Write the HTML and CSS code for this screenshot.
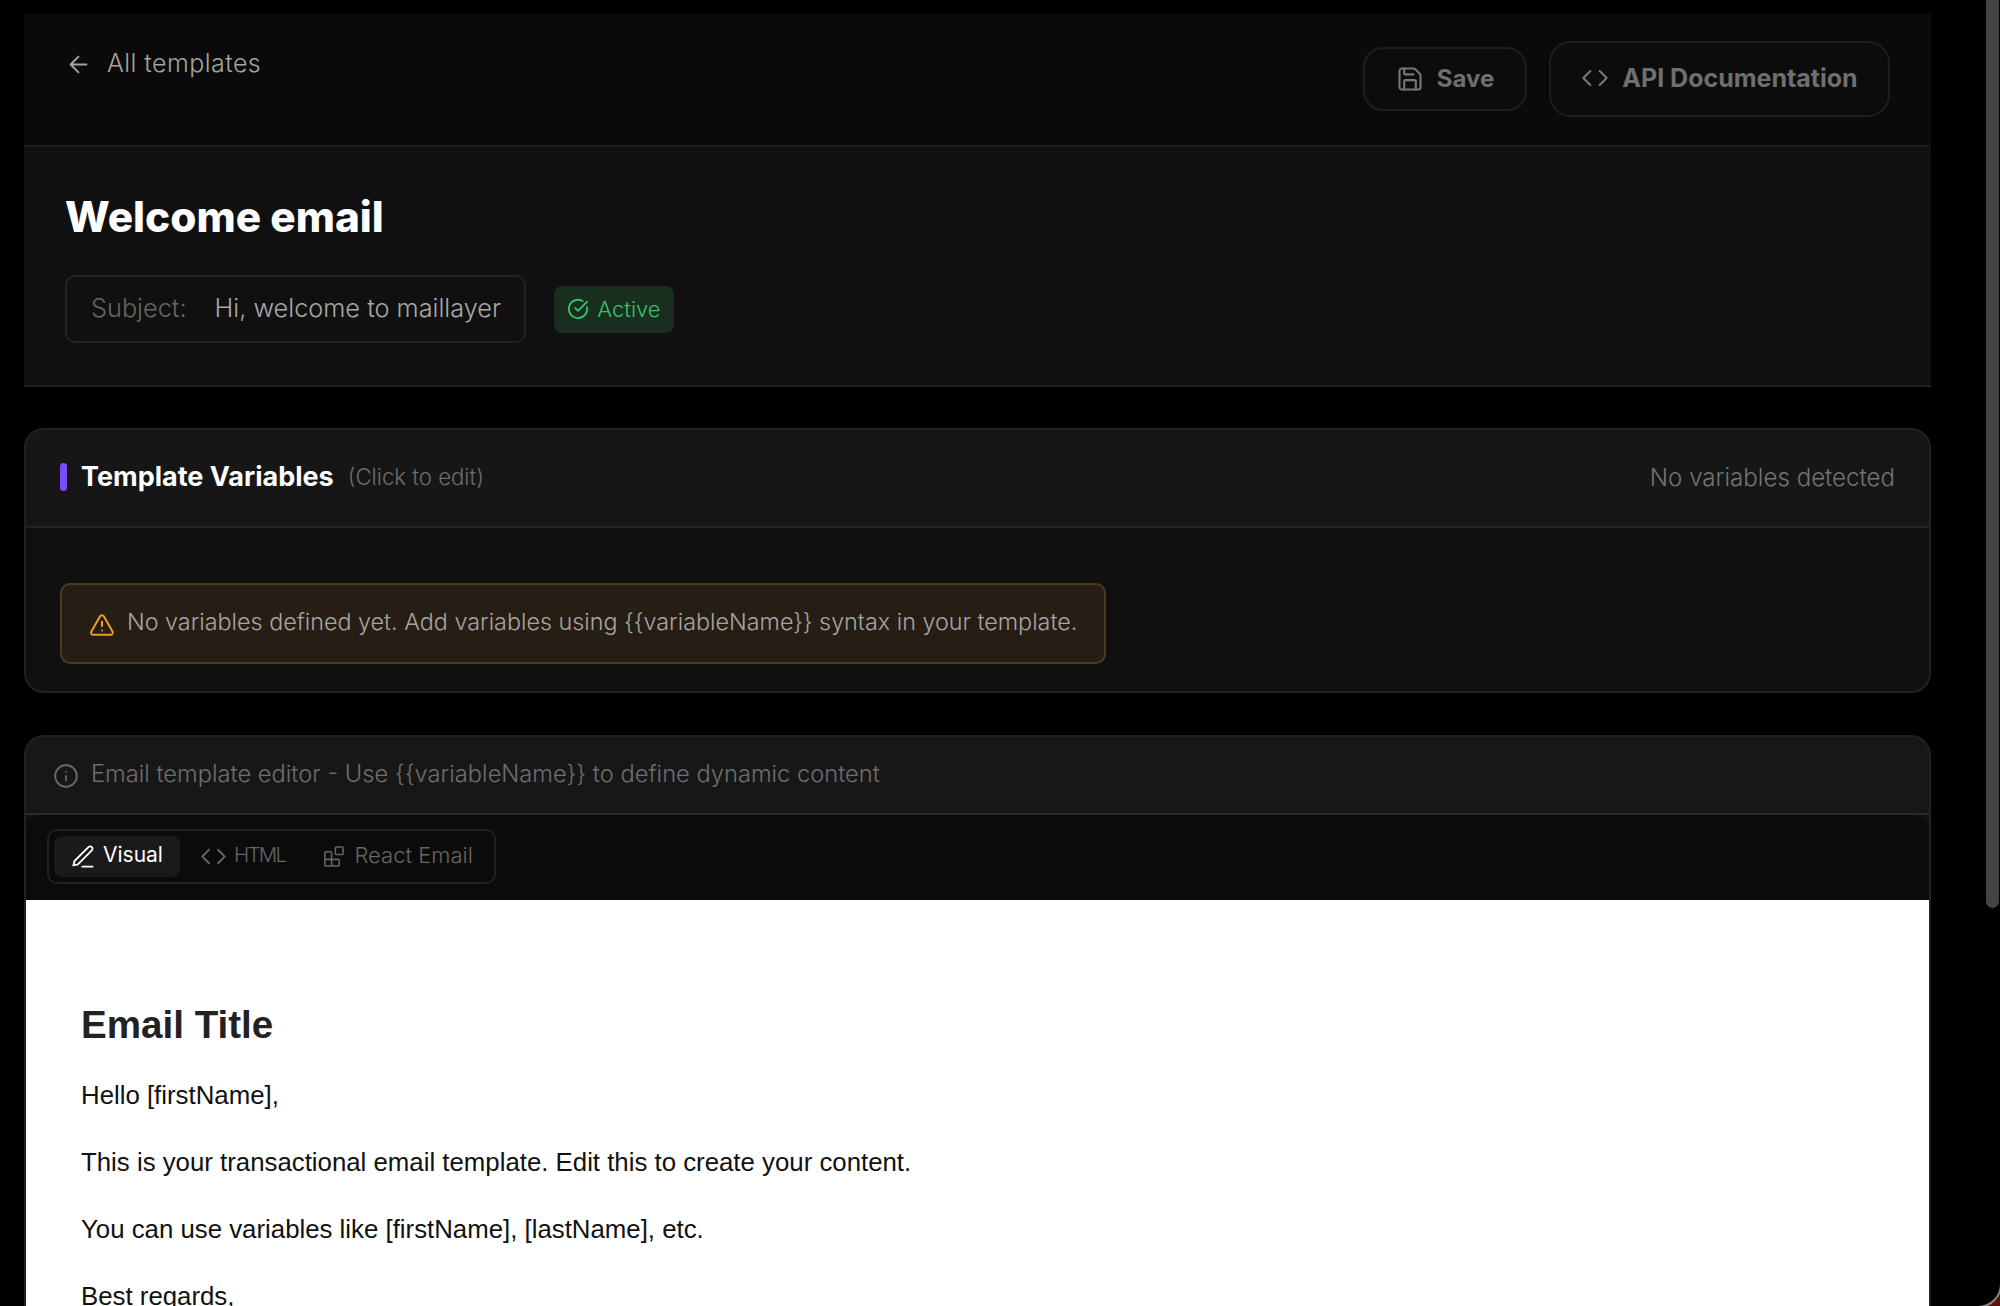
FILE: index.html
```html
<!DOCTYPE html>
<html lang="en">
<head>
<meta charset="utf-8">
<title>Welcome email</title>
<link rel="stylesheet" href="styles.css">
</head>
<body>
<main class="page">
  <section class="panel">
    <header class="topbar">
      <a class="back">
        <svg class="ico-back" viewBox="0 0 24 24"><path d="M19 12H5M12 19l-7-7 7-7"/></svg>
        <span>All templates</span>
      </a>
      <div class="actions">
        <button class="btn btn-save">
          <svg class="ico-btn" viewBox="0 0 24 24"><path d="M15.2 3a2 2 0 0 1 1.4.6l3.8 3.8a2 2 0 0 1 .6 1.4V19a2 2 0 0 1-2 2H5a2 2 0 0 1-2-2V5a2 2 0 0 1 2-2z"/><path d="M17 21v-7a1 1 0 0 0-1-1H8a1 1 0 0 0-1 1v7"/><path d="M7 3v4a1 1 0 0 0 1 1h7"/></svg>
          Save
        </button>
        <button class="btn btn-api">
          <svg class="ico-btn" viewBox="0 0 24 24"><path d="M16 18l6-6-6-6M8 6l-6 6 6 6"/></svg>
          API Documentation
        </button>
      </div>
    </header>
    <div class="hero">
      <h1 class="title">Welcome email</h1>
      <div class="meta">
        <div class="subject"><span class="subject-label">Subject:</span><span class="subject-value">Hi, welcome to maillayer</span></div>
        <div class="badge">
          <svg class="ico-badge" viewBox="0 0 24 24"><path d="M21.8 10A10 10 0 1 1 17 3.3"/><path d="M9 11l3 3L22 4"/></svg>
          Active
        </div>
      </div>
    </div>
  </section>

  <section class="card vars">
    <div class="vars-head">
      <div class="vars-title">
        <span class="accent"></span>
        <h2>Template Variables</h2>
        <span class="hint">(Click to edit)</span>
      </div>
      <span class="none">No variables detected</span>
    </div>
    <div class="vars-body">
      <div class="alert">
        <svg class="ico-alert" viewBox="0 0 24 24"><path d="M21.7 18l-8-14a2 2 0 0 0-3.5 0l-8 14A2 2 0 0 0 4 21h16a2 2 0 0 0 1.7-3"/><path d="M12 9v4M12 17h.01"/></svg>
        <span class="alert-text">No variables defined yet. Add variables using {{variableName}} syntax in your template.</span>
      </div>
    </div>
  </section>

  <section class="card editor">
    <div class="editor-head">
      <svg class="ico-info" viewBox="0 0 24 24"><circle cx="12" cy="12" r="10"/><path d="M12 16v-4M12 8h.01"/></svg>
      <span class="editor-note">Email template editor - Use {{variableName}} to define dynamic content</span>
    </div>
    <div class="toolbar">
      <div class="tabs">
        <div class="tab tab-active">
          <svg class="ico-tab" viewBox="0 0 24 24"><path d="M11 21h9"/><path d="M16.4 3.6a2.1 2.1 0 0 1 3 3L7 19l-4 1 1-4z"/></svg>
          <span class="tab-label">Visual</span>
        </div>
        <div class="tab tab-html">
          <svg class="ico-tab" viewBox="0 0 24 24"><path d="M16 18l6-6-6-6M8 6l-6 6 6 6"/></svg>
          <span class="tab-label html-label">HTML</span>
        </div>
        <div class="tab tab-react">
          <svg class="ico-tab ico-react" viewBox="0 0 24 24"><rect x="14" y="2" width="8" height="8" rx="1"/><path d="M10 22V8a1 1 0 0 0-1-1H4a1 1 0 0 0-1 1v13a1 1 0 0 0 1 1h13a1 1 0 0 0 1-1v-5a1 1 0 0 0-1-1H3"/></svg>
          <span class="tab-label">React Email</span>
        </div>
      </div>
    </div>
    <article class="mail">
      <h2 class="mail-title">Email Title</h2>
      <p>Hello [firstName],</p>
      <p>This is your transactional email template. Edit this to create your content.</p>
      <p>You can use variables like [firstName], [lastName], etc.</p>
      <p>Best regards,</p>
    </article>
  </section>
</main>
<div class="scrollbar"></div>
<div class="corner"></div>
</body>
</html>
```
FILE: styles.css
```css
* { box-sizing: border-box; }
html, body { margin: 0; height: 100%; overflow: hidden; background: #000; }
body { font-family: Inter, "Noto Sans", sans-serif; position: relative; }
svg { fill: none; stroke: currentColor; stroke-width: 2; stroke-linecap: round; stroke-linejoin: round; flex: none; display: block; }

.page { width: 1931px; height: 1306px; overflow: hidden; padding: 14px 0 0 24px; display: flex; flex-direction: column; gap: 41px; }

.panel { flex: none; background: #101010; border-bottom: 2px solid #222; }
.topbar { height: 133px; background: #0a0a0a; border-bottom: 2px solid #1c1c1c; display: flex; justify-content: space-between; padding: 27px 41px 0 41px; }
.back { display: flex; align-items: center; gap: 15px; height: 44px; color: #a3a3a3; font-size: 25px; letter-spacing: .45px; font-weight: 300; }
.ico-back { width: 27px; height: 27px; stroke-width: 1.7; margin-top: 3px; }
.actions { display: flex; align-items: flex-start; gap: 22px; }
.btn { display: flex; align-items: center; justify-content: center; gap: 13px; background: #0c0c0c; border: 2px solid #1e1e1e; color: #6f6f71; font: 700 24px Inter, sans-serif; }
.btn-save { width: 164px; height: 64px; border-radius: 20px; margin-top: 6px; padding-bottom: 2px; }
.btn-api { width: 341px; height: 76px; border-radius: 22px; padding-bottom: 4px; font-size: 25px; }
.ico-btn { width: 28px; height: 28px; color: #77777a; stroke-width: 1.8; }

.hero { height: 238px; padding: 44px 41px 0; }
.title { margin: 0; color: #fff; font-size: 42.3px; line-height: 52px; font-weight: 800; }
.meta { display: flex; align-items: center; gap: 28px; margin-top: 32px; }
.subject { width: 461px; height: 68px; border: 2px solid #232323; border-radius: 10px; display: flex; align-items: center; padding: 0 0 4px 24px; gap: 28px; font-size: 25.3px; font-weight: 300; }
.subject-label { color: #666; }
.subject-value { color: #a8a8a8; }
.badge { width: 120px; height: 47px; border-radius: 8px; background: #1a2e1f; color: #35c468; display: flex; align-items: center; justify-content: center; gap: 8px; font-size: 22px; font-weight: 300; }
.ico-badge { width: 22px; height: 22px; }

.card { border: 2px solid #222; border-radius: 20px; overflow: hidden; }
.vars { flex: none; height: 265px; background: #101010; }
.vars-head { height: 98px; background: #161616; border-bottom: 2px solid #232323; display: flex; align-items: center; justify-content: space-between; padding: 0 34px; }
.vars-title { display: flex; align-items: center; padding-bottom: 3px; }
.accent { width: 7px; height: 28px; border-radius: 4px; background: #7c4dff; margin-right: 14px; }
.vars-title h2 { margin: 0 14px 0 0; color: #fff; font-size: 27px; font-weight: 700; }
.hint { color: #6d6d6d; font-size: 22.2px; font-weight: 300; }
.none { color: #737373; font-size: 24.1px; font-weight: 300; padding-bottom: 2px; }
.vars-body { padding: 55px 34px 0; }
.alert { width: 1046px; height: 81px; border: 2px solid #4f3a1c; border-radius: 10px; background: #261d14; color: #a7a5a2; display: flex; align-items: center; gap: 12px; padding-left: 27px; font-size: 23.33px; font-weight: 300; white-space: nowrap; }
.alert-text { margin-bottom: 4px; }
.ico-alert { width: 26px; height: 26px; color: #f0a020; stroke-width: 1.8; margin-top: 2px; }

.editor { flex: 1; min-height: 0; margin-top: 1px; border-bottom: 0; border-radius: 20px 20px 0 0; background: #111; }
.editor-head { height: 78px; background: #171717; border-bottom: 2px solid #2a2a2a; display: flex; align-items: center; gap: 12px; padding-left: 27px; color: #6e6e6e; font-size: 23.7px; font-weight: 300; }
.editor-note { margin-bottom: 3px; }
.ico-info { width: 26px; height: 26px; stroke-width: 1.6; margin-top: 2px; }
.toolbar { height: 85px; background: #0b0b0b; border-radius: 16px 16px 0 0; padding: 14px 0 0 21px; }
.tabs { width: 449px; height: 55px; border: 2px solid #202020; border-radius: 10px; display: flex; align-items: center; padding: 0 5px; font-size: 22px; font-weight: 300; color: #666; }
.tab { display: flex; align-items: center; height: 41px; gap: 8px; border-radius: 8px; }
.tab-label { margin-bottom: 4px; }
.tab-active { width: 126px; background: #1a1a1a; color: #fff; padding-left: 16px; gap: 6px; font-size: 21px; font-weight: 400; }
.tab-html { margin-left: 20px; gap: 7px; }
.html-label { font-size: 20.5px; letter-spacing: -1.7px; }
.tab-react { margin-left: 37px; gap: 9px; }
.ico-tab { width: 27px; height: 27px; stroke-width: 1.6; }
.ico-react { width: 23px; height: 23px; }

.mail { height: 420px; background: #fff; padding: 102px 0 0 55px; font-family: "Liberation Sans", Arial, sans-serif; color: #111; font-size: 25.8px; }
.mail-title { margin: 0 0 32px; font-size: 38.6px; line-height: 46px; font-weight: 700; color: #222; }
.mail p { margin: 0 0 37px; line-height: 30px; }

.scrollbar { position: absolute; right: 1px; top: -10px; width: 13px; height: 918px; border-radius: 7px; background: #444; }
.corner { position: absolute; right: 0; bottom: 0; width: 22px; height: 22px; background: #5a1208; overflow: hidden; }
.corner::before { content: ""; position: absolute; left: -22px; top: -22px; width: 44px; height: 44px; border-radius: 50%; background: #000; box-shadow: 0 0 0 2px #888; }
```
